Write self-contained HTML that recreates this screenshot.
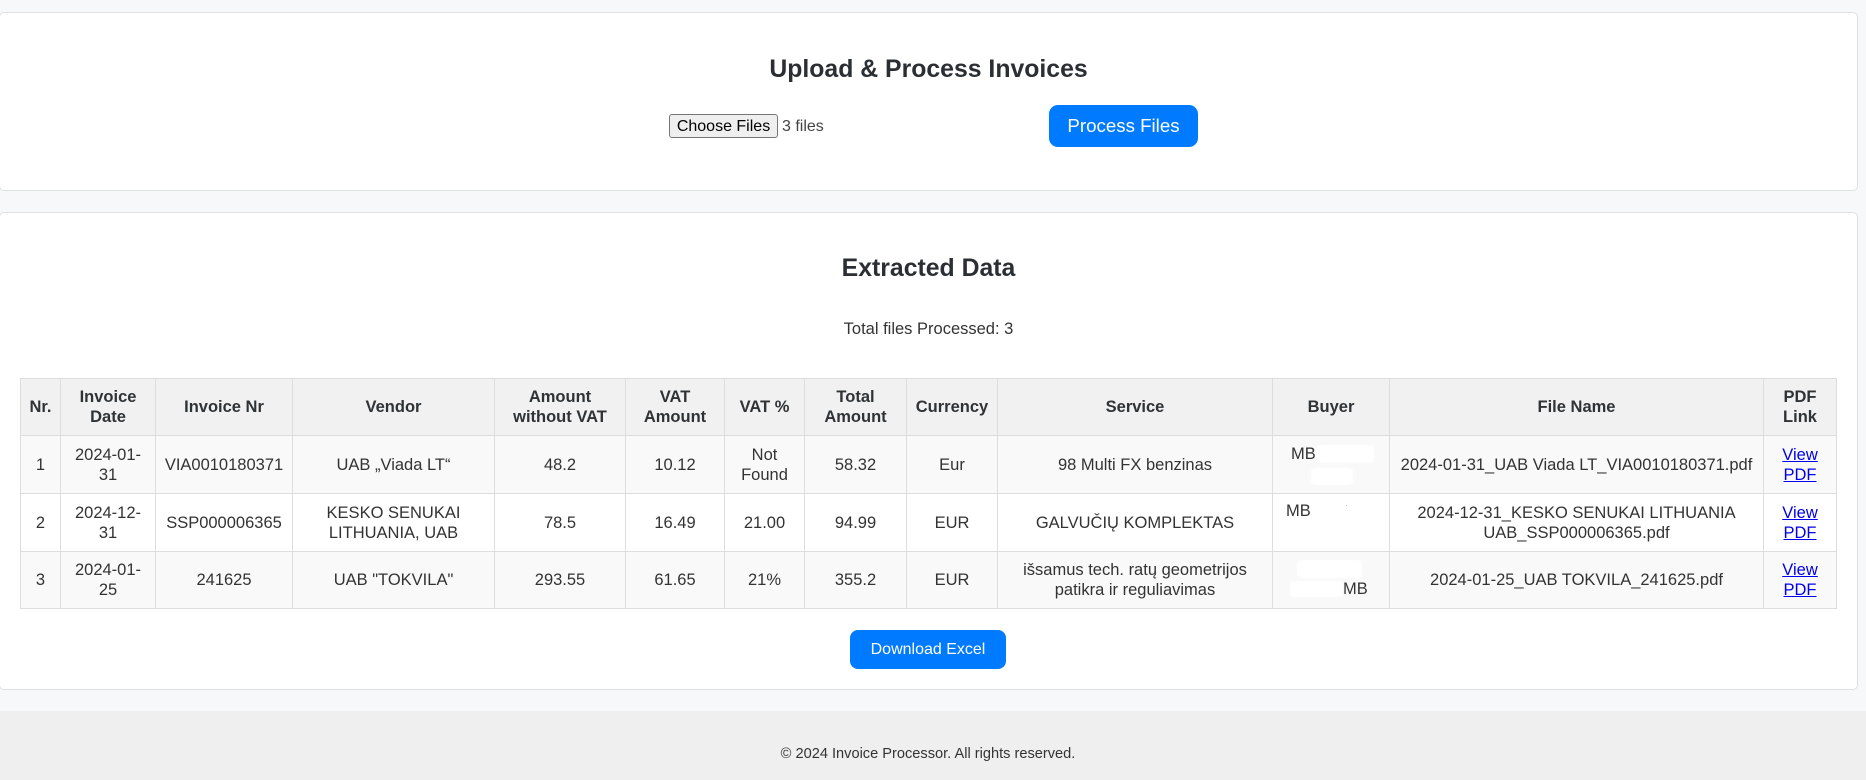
<!DOCTYPE html>
<html lang="en"><head><meta charset="utf-8"><title>Invoice Processor</title>
<style>
*{box-sizing:border-box}
html,body{margin:0;padding:0;width:1866px;height:780px;overflow:hidden;background:#f7f8fa;font-family:"Liberation Sans",Arial,sans-serif;color:#333}
.card{position:absolute;left:-1px;width:1859px;background:#fff;border:1px solid #dfe1e4;border-radius:5px}
.a{position:absolute;white-space:nowrap}
h2{position:absolute;left:0;width:1857px;margin:0;text-align:center;font-size:24.8px;line-height:30px;font-weight:700;color:#2b2f33}
.filebtn{position:absolute;left:669px;top:114px;width:109px;height:24px;background:#efefef;border:1px solid #767676;border-radius:3px;font:16px/23px "Liberation Sans",Arial,sans-serif;color:#000;text-align:center;white-space:nowrap;padding:0}
.btn{position:absolute;background:#007bff;color:#fff;text-align:center;white-space:nowrap}
table{position:absolute;left:20px;top:378px;width:1816px;border-collapse:collapse;table-layout:fixed;font-size:16.5px;line-height:20px;color:#333}
th,td{border:1px solid #ddd;padding:0 8px;text-align:center;vertical-align:middle}
th{background:#f1f1f1;font-weight:700;color:#2f3336}
tr.h{height:57px}tr.r{height:58px}tr.l{height:57px}
tr.o td{background:#f9f9f9}
tr.e td{background:#fff}
td.n{padding:0}
a{color:#00e;text-decoration:underline}
.blob{position:absolute;background:#fff;border-radius:4px;filter:blur(1px)}
footer{position:absolute;left:0;top:711px;width:1866px;height:69px;background:#efefef;text-align:center;font-size:14.6px;line-height:20px;padding:33px 10px 0 0;color:#333}
</style></head><body>

<div class="card" style="top:12px;height:179px"></div>
<h2 style="top:55px">Upload &amp; Process Invoices</h2>
<div class="filebtn">Choose Files</div>
<div class="a" style="left:782px;top:116px;font-size:16px;line-height:21px;color:#444">3 files</div>
<div class="btn" style="left:1049px;top:105px;width:149px;height:42px;border-radius:9px;font-size:18.7px;line-height:42px">Process Files</div>

<div class="card" style="top:212px;height:478px"></div>
<h2 style="top:254px">Extracted Data</h2>
<div class="a" style="left:0;width:1857px;text-align:center;top:319px;font-size:16.5px;line-height:20px">Total files Processed: 3</div>

<table>
<colgroup><col style="width:40px"><col style="width:95px"><col style="width:137px"><col style="width:202px"><col style="width:131px"><col style="width:99px"><col style="width:80px"><col style="width:102px"><col style="width:91px"><col style="width:275px"><col style="width:117px"><col style="width:374px"><col style="width:73px"></colgroup>
<tr class="h"><th class="n">Nr.</th><th>Invoice Date</th><th>Invoice Nr</th><th>Vendor</th><th>Amount without VAT</th><th>VAT Amount</th><th class="n">VAT %</th><th>Total Amount</th><th class="n">Currency</th><th>Service</th><th>Buyer</th><th>File Name</th><th>PDF Link</th></tr>
<tr class="r o"><td class="n">1</td><td>2024-01-31</td><td class="n">VIA0010180371</td><td>UAB „Viada LT“</td><td>48.2</td><td>10.12</td><td>Not Found</td><td>58.32</td><td>Eur</td><td>98 Multi FX benzinas</td><td></td><td class="n">2024-01-31_UAB Viada LT_VIA0010180371.pdf</td><td><a href="#">View PDF</a></td></tr>
<tr class="r e"><td class="n">2</td><td>2024-12-31</td><td class="n">SSP000006365</td><td>KESKO SENUKAI LITHUANIA, UAB</td><td>78.5</td><td>16.49</td><td>21.00</td><td>94.99</td><td>EUR</td><td>GALVUČIŲ KOMPLEKTAS</td><td></td><td>2024-12-31_KESKO SENUKAI LITHUANIA UAB_SSP000006365.pdf</td><td><a href="#">View PDF</a></td></tr>
<tr class="l o"><td class="n">3</td><td>2024-01-25</td><td>241625</td><td>UAB "TOKVILA"</td><td>293.55</td><td>61.65</td><td>21%</td><td>355.2</td><td>EUR</td><td>išsamus tech. ratų geometrijos patikra ir reguliavimas</td><td></td><td>2024-01-25_UAB TOKVILA_241625.pdf</td><td><a href="#">View PDF</a></td></tr>
</table>

<div class="a" style="left:1291px;top:444px;font-size:16.5px;line-height:20px">MB</div>
<div class="blob" style="left:1316px;top:445px;width:58px;height:18px"></div>
<div class="blob" style="left:1311px;top:468px;width:42px;height:17px"></div>
<div class="a" style="left:1286px;top:501px;font-size:16.5px;line-height:20px">MB</div>
<div class="a" style="left:1346px;top:505px;width:1px;height:1px;background:#bbb"></div>
<div class="a" style="left:1343px;top:579px;font-size:16.5px;line-height:20px">MB</div>
<div class="blob" style="left:1297px;top:560px;width:65px;height:18px"></div>
<div class="blob" style="left:1290px;top:581px;width:53px;height:16px"></div>

<div class="btn" style="left:850px;top:630px;width:156px;height:39px;border-radius:8px;font-size:16px;line-height:40px">Download Excel</div>

<footer>© 2024 Invoice Processor. All rights reserved.</footer>
</body></html>
